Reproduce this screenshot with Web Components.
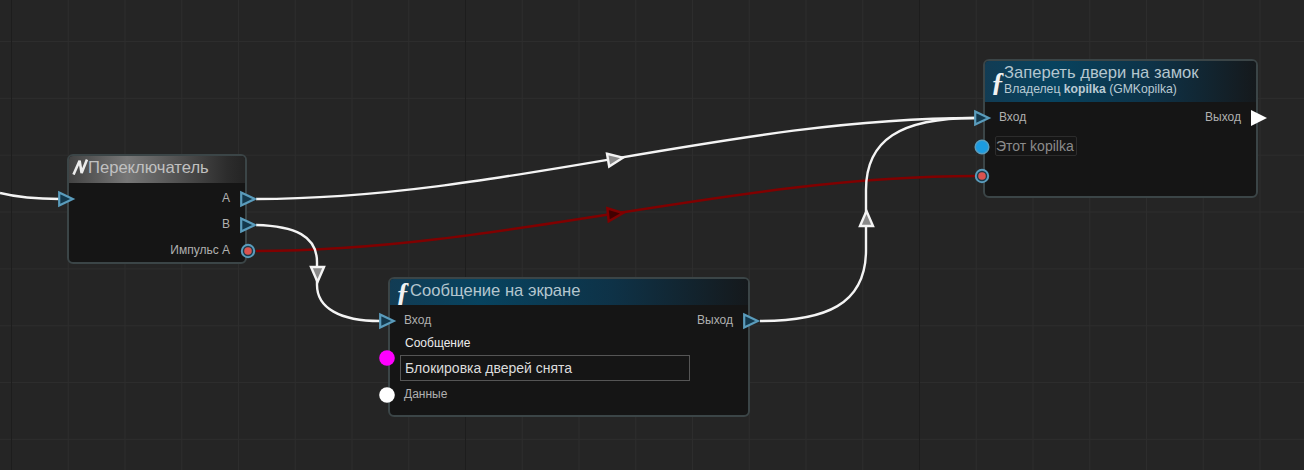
<!DOCTYPE html>
<html>
<head>
<meta charset="utf-8">
<style>
  body { margin: 0; background: #252525; }
</style>
</head>
<body>
<graph-canvas>
  <graph-wires></graph-wires>

  <graph-node kind="flow" head="27" style="left:67px;top:154px;width:180px;height:110px">
    <svg slot="icon" width="16" height="16" viewBox="0 0 16 16" fill="none" stroke="#ececec" stroke-width="2.6" stroke-linejoin="bevel"><path d="M1.5 15.6 L7.6 1.8 L9.6 14 L15 .6"/></svg>
    <span slot="title">Переключатель</span>
    <node-row><node-pin></node-pin><node-pin slot="end" side="out"></node-pin><span slot="end">A</span></node-row>
    <node-row><node-pin slot="end" side="out"></node-pin><span slot="end">B</span></node-row>
    <node-row><node-pin slot="end" side="out" kind="target"></node-pin><span slot="end">Импульс A</span></node-row>
  </graph-node>

  <graph-node kind="func" head="26" style="left:388px;top:277px;width:362px;height:140px">
    <span slot="icon">ƒ</span>
    <span slot="title">Сообщение на экране</span>
    <node-row h="30"><node-pin></node-pin><span>Вход</span><node-pin slot="end" side="out"></node-pin><span slot="end">Выход</span></node-row>
    <node-row h="46" top>
      <node-pin kind="magenta" offset="15"></node-pin>
      <node-field label="Сообщение">Блокировка дверей снята</node-field>
    </node-row>
    <node-row><node-pin kind="white"></node-pin><span>Данные</span></node-row>
  </graph-node>

  <graph-node kind="func" head="41" style="left:983px;top:59px;width:275px;height:139px">
    <span slot="icon">ƒ</span>
    <span slot="title" style="margin-left:-1px">Запереть двери на замок</span>
    <span slot="sub" style="margin-left:-1px">Владелец <b>kopilka</b> (GMKopilka)</span>
    <node-row h="30"><node-pin></node-pin><span>Вход</span><node-pin slot="end" side="out" kind="solid"></node-pin><span slot="end">Выход</span></node-row>
    <node-row h="28"><node-pin kind="blue"></node-pin><node-field muted>Этот kopilka</node-field></node-row>
    <node-row h="30"><node-pin kind="target"></node-pin></node-row>
  </graph-node>
</graph-canvas>

<script>
const graphCanvas = (function(){
  const shadowDOM = /*html*/
  `
    <style>
      :host {
        display: block;
        position: relative;
        width: 1304px;
        height: 470px;
        overflow: hidden;
        font: 12px "Liberation Sans", sans-serif;
        background-color: #252525;
        background-image:
          linear-gradient(to right, #1d1d1d 1px, transparent 1px),
          linear-gradient(to right, #2d2d2d 1px, transparent 1px),
          linear-gradient(to bottom, #2d2d2d 1px, transparent 1px);
        background-size: 454px 100%, 56.75px 100%, 100% 56.85px;
        background-position: 11px 0, 11px 0, 0 41px;
      }
    </style>
    <slot></slot>
  `;
  class GraphCanvas extends HTMLElement {
    connectedCallback() {
      this.shadow = this.attachShadow({mode: 'open'});
      this.shadow.innerHTML = shadowDOM;
    }
  }
  return GraphCanvas;
})()

const graphWires = (function(){
  const WHITE = '#f4f4f4', RED = '#800000';
  const wires = [
    ['M0 193 C 20 198 38 199 60 199', WHITE],
    ['M256 199 C 500 199 730 118 975 118', WHITE],
    ['M256 251 C 500 251 730 176 975 176', RED],
    ['M256 225 C 295 226 317 236 317 262 L 317 285 C 317 308 340 321 380 321', WHITE],
    ['M760 321 C 825 321 866 305 866 250 L 866 190 C 866 140 900 118 975 118', WHITE],
  ];
  // arrows half way along a wire: x, y, angle
  const arrows = [
    [615, 159, -9.5, '#8a8a8a', WHITE],
    [615, 214, -6, '#420000', RED],
    [317.5, 274, 90, '#8a8a8a', WHITE],
    [866.5, 219, -90, '#8a8a8a', WHITE],
  ];
  const shadowDOM = /*html*/
  `
    <style>
      :host { display: block; position: absolute; inset: 0; }
      svg { display: block; }
    </style>
    <svg width="1304" height="470" viewBox="0 0 1304 470" fill="none">
      ${wires.map(w => `<path d="${w[0]}" stroke="${w[1]}" stroke-width="2.4"/>`).join('')}
      ${arrows.map(a => `<path transform="translate(${a[0]} ${a[1]}) rotate(${a[2]})" d="M-7 -6.5 L8 0 L-7 6.5 Z" fill="${a[3]}" stroke="${a[4]}" stroke-width="2.4"/>`).join('')}
    </svg>
  `;
  class GraphWires extends HTMLElement {
    connectedCallback() {
      this.shadow = this.attachShadow({mode: 'open'});
      this.shadow.innerHTML = shadowDOM;
    }
  }
  return GraphWires;
})()

const graphNode = (function(){
  const shadowDOM = /*html*/
  `
    <style>
      :host {
        display: block;
        position: absolute;
        box-sizing: border-box;
        border: 2px solid #3b4547;
        border-radius: 6px;
        background: #151515;
        color: #b0b0b0;
      }
      .head {
        display: flex;
        align-items: center;
        box-sizing: border-box;
        padding: 0 0 3px 3px;
        border-radius: 4px 4px 0 0;
        color: #b4c6cf;
      }
      :host([kind=flow]) .head {
        background: linear-gradient(to right, #424242 0%, #777 33%, #2c2c2c 90%, #242424 100%);
        color: #c0c0c0;
        margin-bottom: 2px;
      }
      :host([kind=func]) .head {
        background: linear-gradient(to right, #123c54 0%, #07435f 25%, #0e3247 62%, #15191c 100%);
      }
      .icon {
        flex: none;
        width: 16px;
        color: #f2f2f2;
      }
      :host([kind=func]) .icon {
        width: 14px;
        padding: 3px 0 0 3px;
        font: italic bold 27px/20px "Liberation Serif", serif;
      }
      .title { font-size: 16.6px; line-height: 18px; }
      .sub { font-size: 12.2px; line-height: 14px; color: #b9cad3; }
      .sub ::slotted(b) { color: #d6e0e5; }
    </style>
    <div class="head">
      <div class="icon"><slot name="icon"></slot></div>
      <div>
        <div class="title"><slot name="title"></slot></div>
        <div class="sub"><slot name="sub"></slot></div>
      </div>
    </div>
    <div class="body"><slot></slot></div>
  `;
  class GraphNode extends HTMLElement {
    connectedCallback() {
      this.shadow = this.attachShadow({mode: 'open'});
      this.shadow.innerHTML = shadowDOM;
      this.shadow.querySelector('.head').style.height = this.getAttribute('head') + 'px';
    }
  }
  return GraphNode;
})()

const nodeRow = (function(){
  const shadowDOM = /*html*/
  `
    <style>
      :host {
        display: flex;
        justify-content: space-between;
        align-items: center;
        height: 26px;
      }
      :host([top]) { align-items: flex-start; }
      .start, .end { display: flex; align-items: inherit; height: 100%; }
      .start { gap: 9px; }
      .end { gap: 10px; flex-direction: row-reverse; }
    </style>
    <div class="start"><slot></slot></div>
    <div class="end"><slot name="end"></slot></div>
  `;
  class NodeRow extends HTMLElement {
    connectedCallback() {
      this.shadow = this.attachShadow({mode: 'open'});
      this.shadow.innerHTML = shadowDOM;
      if (this.hasAttribute('h')) this.style.height = this.getAttribute('h') + 'px';
    }
  }
  return NodeRow;
})()

const nodePin = (function(){
  const BLUE = '#5a9cbc';
  const shapes = {
    exec: `<path d="M1.2 1.4 L14.8 8 L1.2 14.6 Z" fill="#13384c" stroke="${BLUE}" stroke-width="2.2"/>`,
    solid: `<path d="M0 0 L16 8 L0 16 Z" fill="#fff"/>`,
    target: `<circle cx="8" cy="8" r="6.2" fill="#1d3a4a" stroke="${BLUE}" stroke-width="2"/><circle cx="8" cy="8" r="3.8" fill="#d9534f"/>`,
    magenta: `<circle cx="8" cy="8" r="7.8" fill="#ff00ff"/>`,
    white: `<circle cx="8" cy="8" r="7.8" fill="#fff"/>`,
    blue: `<circle cx="8" cy="8" r="6.8" fill="#1c9be0" stroke="${BLUE}" stroke-width="1.5"/>`,
  };
  class NodePin extends HTMLElement {
    connectedCallback() {
      this.shadow = this.attachShadow({mode: 'open'});
      const kind = this.getAttribute('kind') || 'exec';
      this.shadow.innerHTML = /*html*/`
        <style>
          :host { display: block; flex: none; width: 16px; height: 16px; margin: 2px 0 0 -11px; }
          :host([side=out]) { margin: 2px -11px 0 0; }
          svg { display: block; overflow: visible; }
        </style>
        <svg width="16" height="16" viewBox="0 0 16 16">${shapes[kind]}</svg>
      `;
      if (this.hasAttribute('offset')) this.style.marginTop = this.getAttribute('offset') + 'px';
    }
  }
  return NodePin;
})()

const nodeField = (function(){
  class NodeField extends HTMLElement {
    connectedCallback() {
      this.shadow = this.attachShadow({mode: 'open'});
      const label = this.getAttribute('label');
      this.shadow.innerHTML = /*html*/`
        <style>
          :host { display: block; margin-left: -4px; }
          .label { height: 20px; line-height: 16px; padding-left: 5px; color: #ececec; }
          .box {
            box-sizing: border-box;
            width: 290px;
            height: 26px;
            line-height: 24px;
            padding-left: 4px;
            border: 1px solid #555;
            color: #dcdcdc;
            font-size: 14px;
            white-space: nowrap;
          }
          :host([muted]) .box {
            width: 82px;
            height: 20px;
            line-height: 18px;
            padding-left: 0;
            border: 1px solid #2c2c2c;
            border-radius: 2px;
            color: #8b8b8b;
          }
        </style>
        ${label ? `<div class="label">${label}</div>` : ''}
        <div class="box"><slot></slot></div>
      `;
    }
  }
  return NodeField;
})()

customElements.define('graph-canvas', graphCanvas);
customElements.define('graph-wires', graphWires);
customElements.define('graph-node', graphNode);
customElements.define('node-row', nodeRow);
customElements.define('node-pin', nodePin);
customElements.define('node-field', nodeField);
</script>
</body>
</html>
